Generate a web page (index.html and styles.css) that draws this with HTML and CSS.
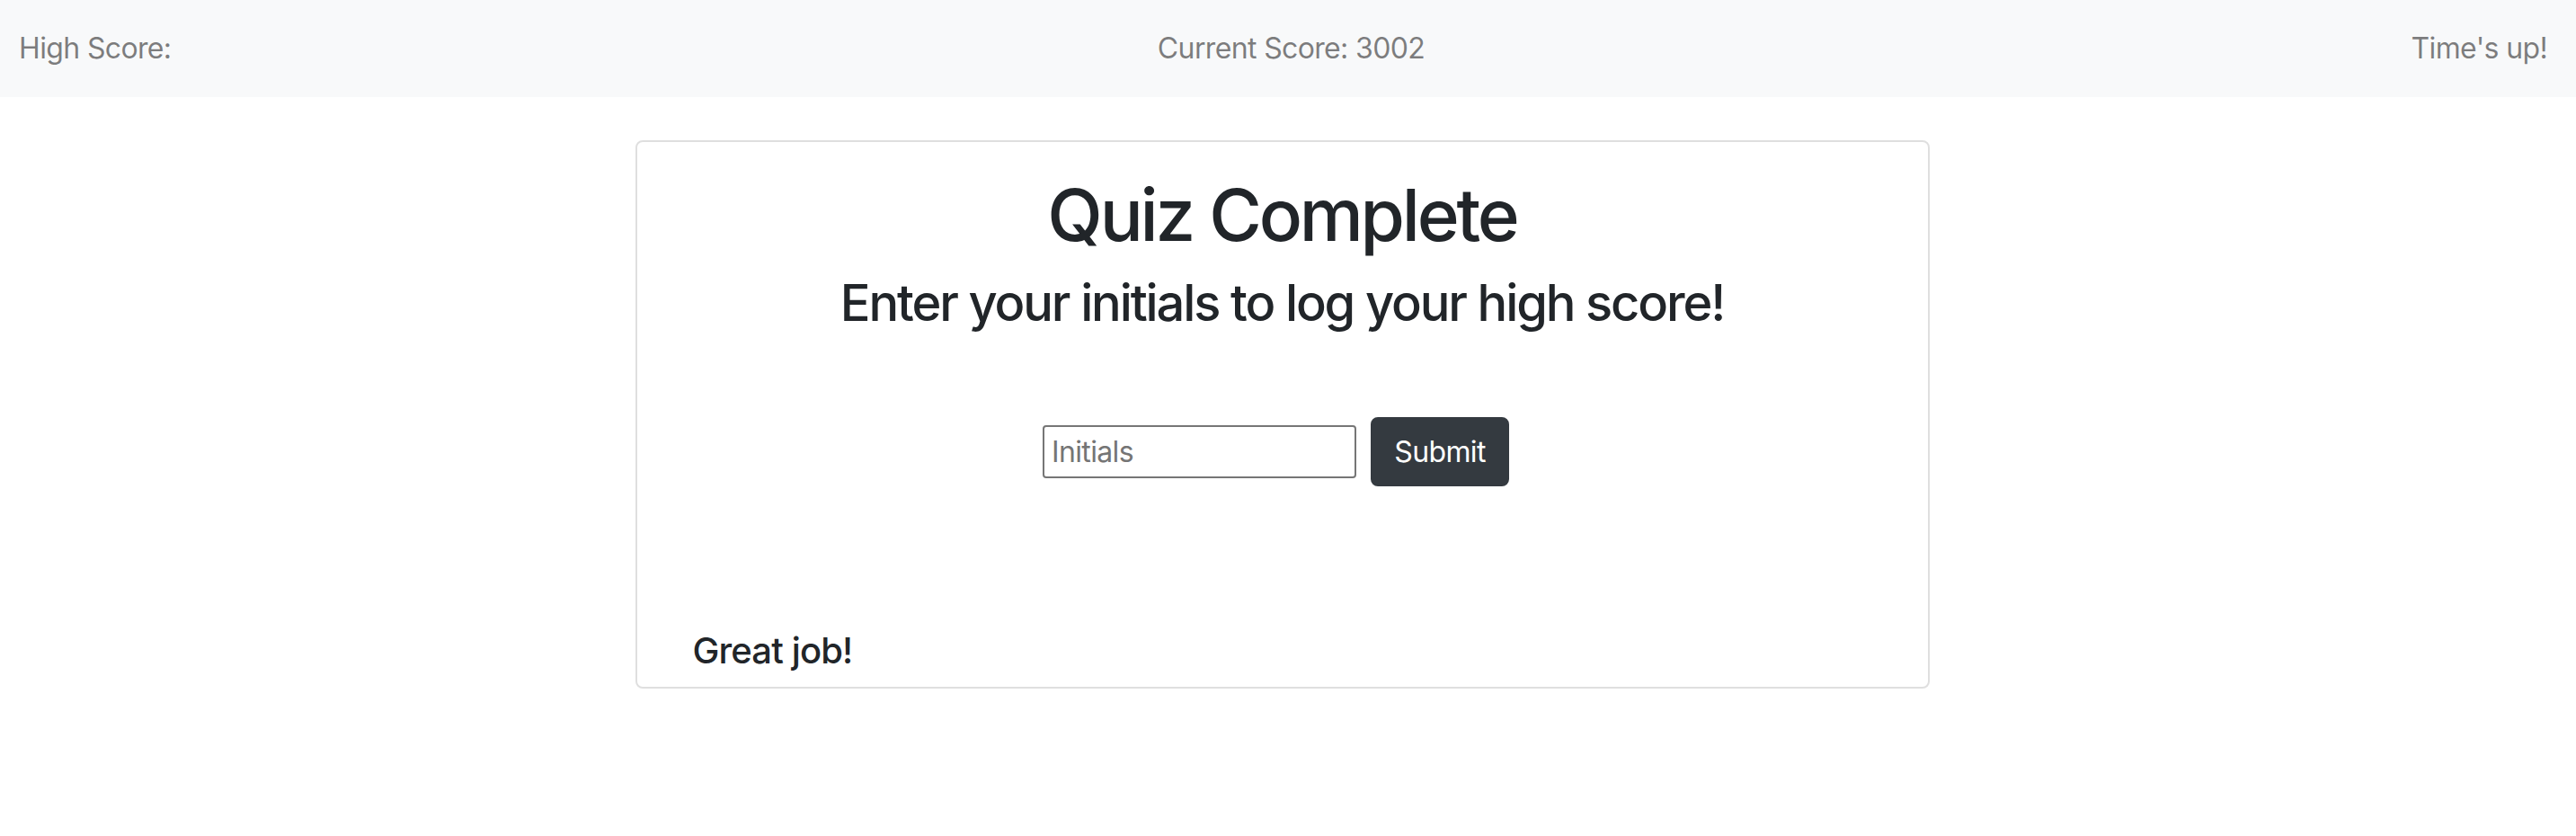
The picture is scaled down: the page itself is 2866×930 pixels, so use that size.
FILE: index.html
```html
<!DOCTYPE html>
<html lang="en">
<head>
<meta charset="utf-8">
<title>Quiz Complete</title>
<link rel="stylesheet" href="styles.css">
</head>
<body>
<nav class="navbar">
  <span class="nav-text">High Score:</span>
  <span class="nav-text">Current Score: 3002</span>
  <span class="nav-text">Time's up!</span>
</nav>
<main class="main">
  <section class="card">
    <h1 class="title">Quiz Complete</h1>
    <h3 class="subtitle">Enter your initials to log your high score!</h3>
    <form class="score-form">
      <input class="initials" type="text" placeholder="Initials">
      <button class="submit" type="button">Submit</button>
    </form>
    <h5 class="feedback">Great job!</h5>
  </section>
</main>
</body>
</html>
```

FILE: styles.css
```css
html, body {
  margin: 0;
  padding: 0;
  background: #ffffff;
}
body {
  font-family: Inter, "Liberation Sans", sans-serif;
  color: #212529;
}
.navbar {
  display: flex;
  justify-content: space-between;
  align-items: center;
  height: 108px;
  box-sizing: border-box;
  padding: 0 32px 0 21px;
  background: #f8f9fa;
  font-size: 32px;
  line-height: 48px;
  letter-spacing: -0.02em;
  color: rgba(0, 0, 0, 0.5);
}
.main {
  display: flex;
  justify-content: center;
  padding: 48px 13px 0 0;
}
.card {
  width: 1440px;
  height: 610px;
  box-sizing: border-box;
  border: 2px solid rgba(0, 0, 0, 0.125);
  border-radius: 8px;
  display: flex;
  flex-direction: column;
  align-items: center;
  padding: 33px 0 16px;
}
.title {
  margin: 0 0 17px;
  font-size: 80px;
  line-height: 96px;
  font-weight: 500;
  letter-spacing: -0.04em;
}
.subtitle {
  margin: 0;
  font-size: 56px;
  line-height: 67px;
  font-weight: 500;
  letter-spacing: -0.038em;
}
.score-form {
  display: flex;
  align-items: center;
  gap: 16px;
  margin-top: 93px;
  padding-right: 14px;
}
.initials {
  width: 349px;
  height: 59px;
  box-sizing: border-box;
  border: 2px solid #767676;
  border-radius: 4px;
  padding: 0 8px;
  font-family: inherit;
  font-size: 32px;
  letter-spacing: -0.02em;
  color: #212529;
  background: #fff;
}
.initials::placeholder {
  color: #757575;
}
.submit {
  width: 154px;
  height: 77px;
  box-sizing: border-box;
  border: 2px solid #343a40;
  border-radius: 8px;
  background: #343a40;
  color: #ffffff;
  font-family: inherit;
  font-size: 32px;
  line-height: 48px;
  letter-spacing: -0.02em;
  padding: 0 24px;
}
.feedback {
  align-self: flex-start;
  margin: auto 0 0 62px;
  font-size: 40px;
  line-height: 48px;
  font-weight: 500;
  letter-spacing: -0.022em;
}
```
